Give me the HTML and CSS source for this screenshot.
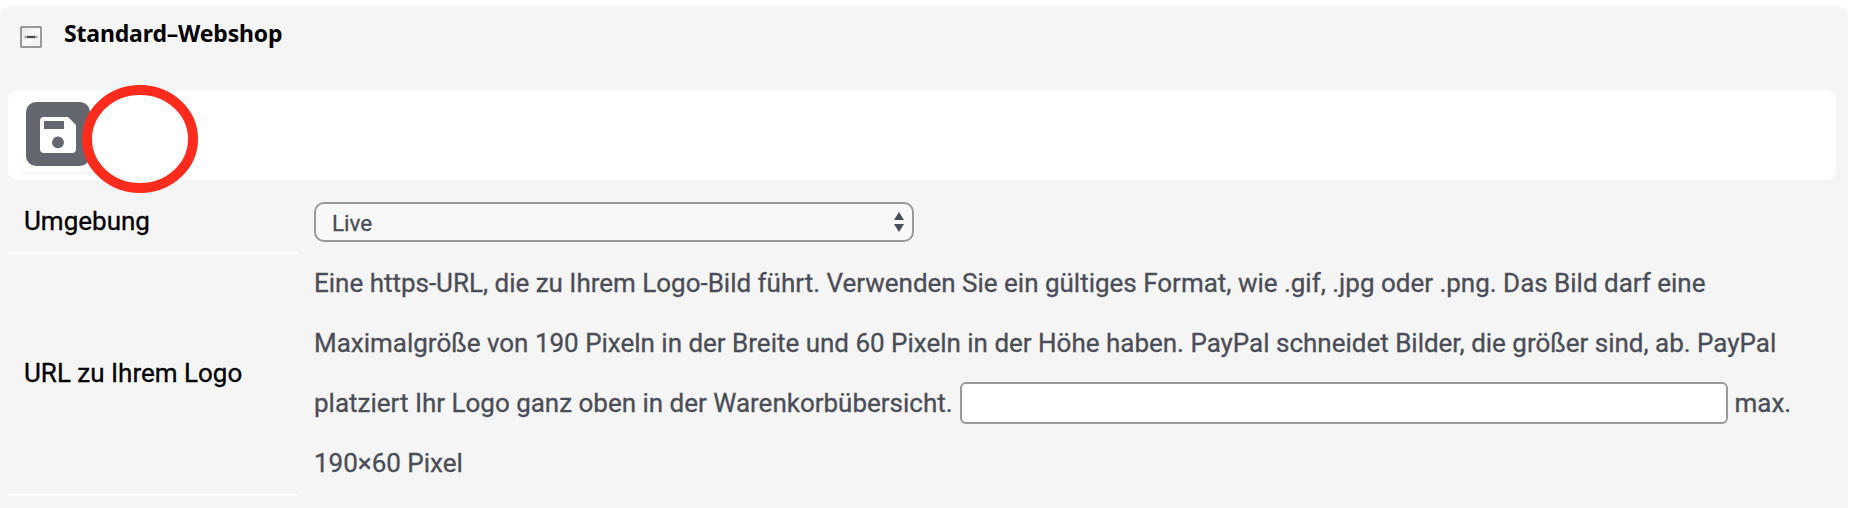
FILE: index.html
```html
<!DOCTYPE html>
<html lang="de">
<head>
<meta charset="utf-8">
<title>Standard-Webshop</title>
<link rel="stylesheet" href="styles.css">
</head>
<body>
<main class="panel">
  <header class="panel-header">
    <svg class="toggle" width="22" height="22" viewBox="0 0 22 22">
      <defs><linearGradient id="shade" x1="0" y1="0" x2="1" y2="1"><stop offset="0" stop-color="#e3e3e3"/><stop offset=".5" stop-color="#fafafa"/><stop offset="1" stop-color="#f0f0f0"/></linearGradient></defs>
      <rect x="1" y="1" width="20" height="20" rx=".5" fill="url(#shade)" stroke="#999" stroke-width="2"/>
      <path d="M4.500 11h13" stroke="#a5a5a5" stroke-width="2.600"/>
      <path d="M7 11h8" stroke="#4a4a4a" stroke-width="2"/>
    </svg>
    <h1 class="title">Standard–Webshop</h1>
  </header>
  <section class="toolbar">
    <div class="tool">
      <button class="save" aria-label="Speichern">
        <svg width="36" height="36" viewBox="0 0 36 36">
          <path fill="#fff" fill-rule="evenodd" d="M4 0H28L36 8V32Q36 36 32 36H4Q0 36 0 32V4Q0 0 4 0ZM4 4V12H24V4ZM18 19.500a5.900 5.900 0 1 0 .01 0Z"/>
        </svg>
      </button>
      <svg class="marker" width="116" height="108" viewBox="0 0 116 108">
        <ellipse cx="58" cy="54" rx="53" ry="49" fill="#fff" stroke="#ff2b1c" stroke-width="10"/>
      </svg>
    </div>
  </section>
  <section class="form">
    <div class="label label-env">Umgebung</div>
    <div class="field field-env">
      <div class="select"><span class="value">Live</span>
        <svg width="10" height="20" viewBox="0 0 10 20"><path fill="#4a4d57" d="M5 0L10 8H0ZM0 12H10L5 20Z"/></svg>
      </div>
    </div>
    <div class="label label-logo">URL zu Ihrem Logo</div>
    <div class="field field-logo">Eine https-URL, die zu Ihrem Logo-Bild führt. Verwenden Sie ein gültiges Format, wie .gif, .jpg oder .png. Das Bild darf eine Maximalgröße von 190 Pixeln in der Breite und 60 Pixeln in der Höhe haben. PayPal schneidet Bilder, die größer sind, ab. PayPal platziert Ihr Logo ganz oben in der Warenkorbübersicht. <input class="url" type="text"> max. 190×60 Pixel</div>
  </section>
</main>
</body>
</html>
```
FILE: styles.css
```css
* { box-sizing: border-box; }
body {
  margin: 0;
  height: 508px;
  overflow: hidden;
  background: #fff;
  color: #4a4d57;
  font: 26px/60px Roboto, sans-serif;
  -webkit-text-stroke: .3px;
}
.panel {
  width: 1848px;
  height: 520px;
  margin-top: 6px;
  padding: 0 12px 0 8px;
  background: #f5f5f5;
  border-radius: 10px;
}
.panel-header {
  display: flex;
  align-items: flex-start;
  height: 84px;
  padding-left: 12px;
}
.toggle { margin-top: 20px; }
.title {
  margin: 12px 0 0 22px;
  color: #000;
  font: bold 23px/30px "Noto Sans", sans-serif;
  letter-spacing: -.16px;
  white-space: nowrap;
  -webkit-text-stroke: 0;
}
.toolbar {
  height: 90px;
  padding: 12px;
  background: #fff;
  border-radius: 10px;
}
.tool {
  position: relative;
  width: 76px;
  height: 72px;
  padding-left: 6px;
  border-bottom: 2px solid #f5f5f5;
}
.save {
  display: flex;
  align-items: center;
  justify-content: center;
  width: 64px;
  height: 64px;
  padding: 2px 0 0;
  border: 0;
  border-radius: 10px;
  background: #646670;
}
.marker {
  position: absolute;
  left: 62px;
  top: -17px;
}
.form {
  display: grid;
  grid-template-columns: 290px 1fr;
  grid-template-rows: 74px 242px;
  column-gap: 16px;
}
.label {
  padding-left: 16px;
  border-bottom: 2px solid #fff;
  color: #000;
}
.label-env { padding-top: 11px; }
.label-logo { padding-top: 89px; }
.field-env { padding-top: 22px; }
.field-logo {
  margin-top: -1px;
  padding-right: 12px;
  letter-spacing: -.01px;
}
.select {
  display: flex;
  align-items: center;
  justify-content: space-between;
  width: 600px;
  height: 40px;
  padding: 0 8px 0 16px;
  border: 2px solid #999;
  border-radius: 10px;
  background: #f8f8f8;
  font-size: 22.5px;
  line-height: 36px;
}
.value { padding-top: 1px; }
.url {
  width: 768px;
  height: 42px;
  margin-left: 1px;
  padding: 0 8px;
  border: 2px solid #999;
  border-radius: 6px;
  background: #fff;
  font: 26px/38px Roboto, sans-serif;
}
```
